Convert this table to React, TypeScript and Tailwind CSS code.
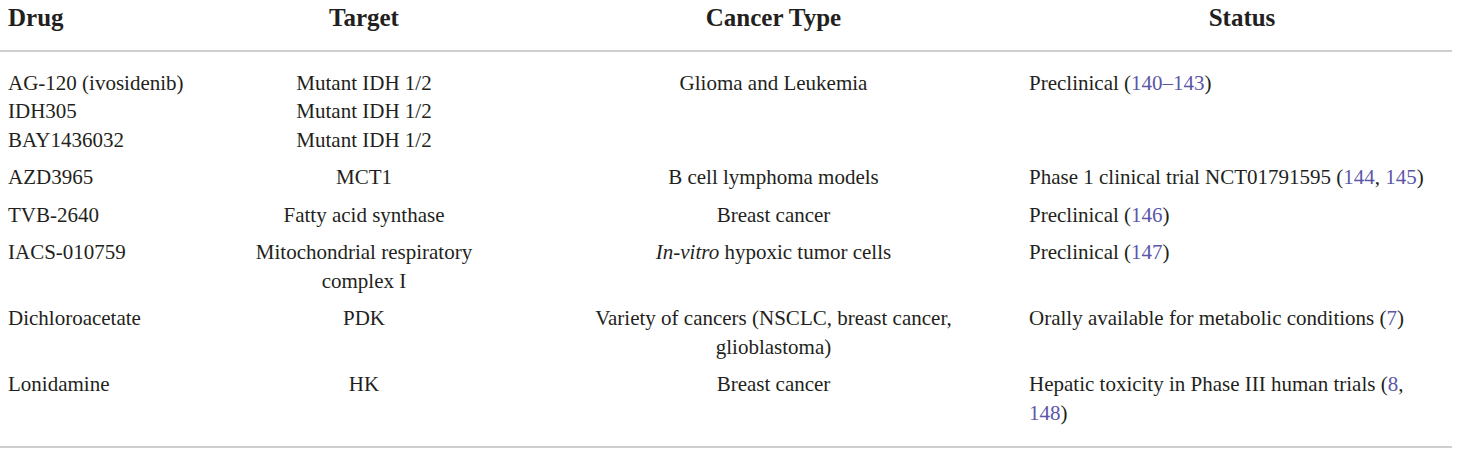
import type { ReactNode } from 'react';

interface DrugRow {
  id: string;
  drug: ReactNode;
  target: ReactNode;
  cancer: ReactNode;
  status: ReactNode;
}

const Ref = ({ children }: { children: ReactNode }) => (
  <span className="text-[#5b56a8]">{children}</span>
);

const rows: DrugRow[] = [
  {
    id: 'idh',
    drug: (
      <>
        AG-120 (ivosidenib)<br />IDH305<br />BAY1436032
      </>
    ),
    target: (
      <>
        Mutant IDH 1/2<br />Mutant IDH 1/2<br />Mutant IDH 1/2
      </>
    ),
    cancer: 'Glioma and Leukemia',
    status: (
      <>
        Preclinical (<Ref>140–143</Ref>)
      </>
    ),
  },
  {
    id: 'azd',
    drug: 'AZD3965',
    target: 'MCT1',
    cancer: 'B cell lymphoma models',
    status: (
      <>
        Phase 1 clinical trial NCT01791595 (<Ref>144</Ref>, <Ref>145</Ref>)
      </>
    ),
  },
  {
    id: 'tvb',
    drug: 'TVB-2640',
    target: 'Fatty acid synthase',
    cancer: 'Breast cancer',
    status: (
      <>
        Preclinical (<Ref>146</Ref>)
      </>
    ),
  },
  {
    id: 'iacs',
    drug: 'IACS-010759',
    target: (
      <>
        Mitochondrial respiratory<br />complex I
      </>
    ),
    cancer: (
      <>
        <i>In-vitro</i> hypoxic tumor cells
      </>
    ),
    status: (
      <>
        Preclinical (<Ref>147</Ref>)
      </>
    ),
  },
  {
    id: 'dca',
    drug: 'Dichloroacetate',
    target: 'PDK',
    cancer: (
      <>
        Variety of cancers (NSCLC, breast cancer,<br />glioblastoma)
      </>
    ),
    status: (
      <>
        Orally available for metabolic conditions (<Ref>7</Ref>)
      </>
    ),
  },
  {
    id: 'lnd',
    drug: 'Lonidamine',
    target: 'HK',
    cancer: 'Breast cancer',
    status: (
      <>
        Hepatic toxicity in Phase III human trials (<Ref>8</Ref>,<br />
        <Ref>148</Ref>)
      </>
    ),
  },
];

const cols = 'grid grid-cols-[202px_324px_495px_431px]';

export default function App() {
  return (
    <div
      className="w-[1460px] h-[453px] bg-white text-[#231f20]"
      style={{ fontFamily: '"Liberation Serif", "Times New Roman", serif' }}
    >
      <div className="w-[1452px]">
        {/* header */}
        <div className={`${cols} pt-[4px] h-[52px] text-[25px] leading-[28px] font-bold border-b-2 border-[#cfcfcf]`}>
          <div className="px-2">Drug</div>
          <div className="px-2 text-center">Target</div>
          <div className="px-2 text-center">Cancer Type</div>
          <div className="pl-[19px] pr-2 text-center">Status</div>
        </div>

        {/* body */}
        <div className="pt-[12px] pb-[14px] border-b-2 border-[#cfcfcf] text-[21px] leading-[28.5px] whitespace-nowrap">
          {rows.map(r => (
            <div key={r.id} className={`${cols} py-[4.5px]`}>
              <div className="px-2">{r.drug}</div>
              <div className="px-2 text-center">{r.target}</div>
              <div className="px-2 text-center">{r.cancer}</div>
              <div className="px-2">{r.status}</div>
            </div>
          ))}
        </div>
      </div>
    </div>
  );
}
